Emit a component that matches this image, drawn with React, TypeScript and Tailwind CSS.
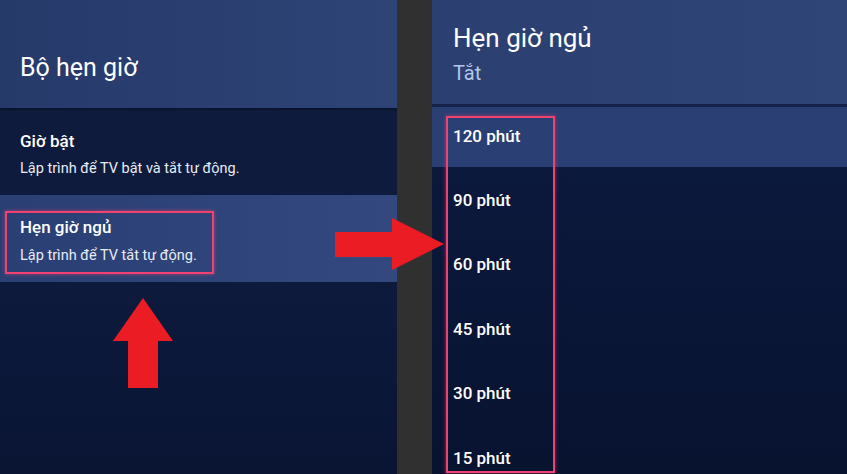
const times = ["120 phút", "90 phút", "60 phút", "45 phút", "30 phút", "15 phút"];

export default function App() {
  return (
    <div className="relative flex h-[474px] w-[847px] overflow-hidden bg-[#303030] font-['Roboto',sans-serif] text-white">
      {/* Timer menu */}
      <section className="flex w-[397px] shrink-0 flex-col">
        <header className="h-[108px] shrink-0 bg-gradient-to-r from-[#263a6a] to-[#2e4476] pl-5 pt-[55px]">
          <h1 className="text-[25px] leading-none">Bộ hẹn giờ</h1>
        </header>
        <div className="h-[87px] shrink-0 border-t-2 border-[#0a1430] bg-[#0f1b3d] pl-5 pt-[23px]">
          <div className="text-[17px] font-medium leading-none">Giờ bật</div>
          <div className="mt-[12px] text-[14.5px] leading-none text-[#e8ecf5]">Lập trình để TV bật và tắt tự động.</div>
        </div>
        <div className="h-[87px] shrink-0 bg-gradient-to-r from-[#2a3f74] to-[#32487f] pl-[5px] pt-[16px]">
          <div className="h-[63px] w-[209px] border-2 border-[#ef4270] pl-[13px] pt-[6px] shadow-[0_0_4px_rgba(239,66,112,0.6)]">
            <div className="text-[17px] font-medium leading-none">Hẹn giờ ngủ</div>
            <div className="mt-[13px] text-[14.5px] leading-none text-[#e8ecf5]">Lập trình để TV tắt tự động.</div>
          </div>
        </div>
        <div className="flex-1 bg-gradient-to-b from-[#0d1a3c] to-[#0a1534]" />
      </section>

      <div className="w-[35px] shrink-0" />

      {/* Sleep timer options */}
      <section className="flex min-w-0 flex-1 flex-col">
        <header className="h-[104px] shrink-0 bg-gradient-to-r from-[#2b3f70] to-[#2f4577] pl-[21px] pt-[25px]">
          <h2 className="text-[26px] leading-none">Hẹn giờ ngủ</h2>
          <div className="mt-[12px] text-[20px] leading-none text-[#b3c6ea]">Tắt</div>
        </header>
        <div className="min-h-0 flex-1 overflow-hidden border-t-[3px] border-[#15234a] bg-gradient-to-b from-[#0c1a3f] to-[#081330]">
          {times.map((t, i) => (
            <div
              key={t}
              className={
                i === 0
                  ? "flex h-[60px] items-center bg-[#2a3f74] pl-[21px] text-[17px] font-medium"
                  : "flex h-[64.5px] items-center pl-[21px] pt-[2px] text-[17px] font-medium"
              }
            >
              {t}
            </div>
          ))}
        </div>
      </section>

      {/* Option list highlight */}
      <div className="pointer-events-none absolute left-[446px] top-[116px] h-[357px] w-[109px] border-2 border-[#ef4270] shadow-[0_0_4px_rgba(239,66,112,0.6)]" />

      {/* Pointer arrows */}
      <svg className="pointer-events-none absolute inset-0" width="847" height="474" viewBox="0 0 847 474">
        <polygon points="143,298 173,341 158,341 158,388 128,388 128,341 113,341" fill="#ec1c24" />
        <polygon points="335,232 392,232 392,218 444,244 392,270 392,257 335,257" fill="#ec1c24" />
      </svg>
    </div>
  );
}
